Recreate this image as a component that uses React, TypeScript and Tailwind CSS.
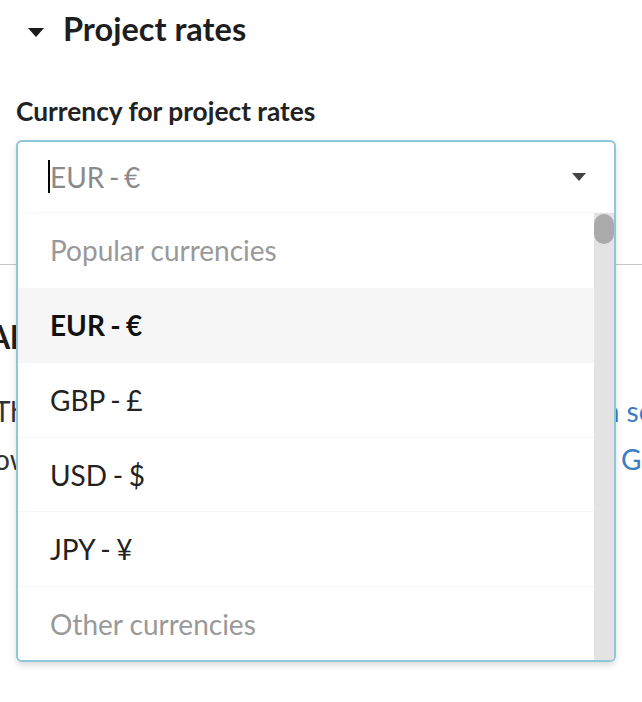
import { useState } from 'react';

const popular = ['EUR - €', 'GBP - £', 'USD - $', 'JPY - ¥'];

export default function App() {
  const [selected] = useState('EUR - €');

  return (
    <div className="relative min-h-screen overflow-hidden bg-white font-['Lato',sans-serif] text-[#1e1e1e]">
      <div className="pt-[13px]">
        <div className="flex items-center gap-[19px] pl-[28px]">
          <svg width="16" height="9" viewBox="0 0 16 9" className="mt-[7px] shrink-0">
            <path d="M0 0h16L8 9z" fill="#1a1a1a" />
          </svg>
          <h2 className="text-[32.5px] leading-none font-bold">Project rates</h2>
        </div>

        <label className="mt-[52px] block pl-4 text-[26.3px] leading-none font-bold text-[#222]">
          Currency for project rates
        </label>

        <div className="relative mt-[16px] mr-[26px] ml-4 h-[72px]">
          <div className="absolute inset-x-0 top-0 z-10 flex flex-col overflow-hidden rounded-[6px] border-2 border-[#8ec6da] bg-white shadow-[0_3px_6px_rgba(0,0,0,0.15)]">
            <div className="flex h-[70px] items-center pr-[28px] pl-[30px]">
              <span className="h-[33px] w-[2px] bg-black" />
              <span className="flex-1 text-[28px] leading-none [word-spacing:-2.5px] text-[#8a8a8a]">
                {selected}
              </span>
              <svg width="14" height="8" viewBox="0 0 14 8" className="mt-[1px]">
                <path d="M0 0h14L7 8z" fill="#444" />
              </svg>
            </div>
            <div className="flex h-[448px] border-t border-[#f6f6f6]">
              <ul className="flex-1">
                <li className="flex h-[75px] items-center pl-[32px] text-[28px] leading-none text-[#999]">
                  Popular currencies
                </li>
                {popular.map((c) => (
                  <li
                    key={c}
                    className={
                      c === selected
                        ? 'flex h-[74.5px] items-center bg-[#f6f6f6] pl-[32px] text-[28px] leading-none font-bold [word-spacing:-1.5px] text-[#111]'
                        : 'flex h-[74.5px] items-center border-t border-[#f6f6f6] pl-[32px] text-[28px] leading-none [word-spacing:-1.5px] text-[#222]'
                    }
                  >
                    {c}
                  </li>
                ))}
                <li className="flex h-[74.5px] items-center border-t border-[#f6f6f6] pl-[32px] text-[28px] leading-none text-[#999]">
                  Other currencies
                </li>
              </ul>
              <div className="w-[20px] bg-[#e3e3e3] pt-[1px]">
                <div className="h-[30px] w-[20px] rounded-full bg-[#aaaaaa]" />
              </div>
            </div>
          </div>
        </div>

        <div className="mt-[52px] h-px bg-[#c9c9c9]" />

        <h2 className="mt-[56px] -ml-[12px] text-[32px] leading-none font-bold whitespace-nowrap">
          All project rates
        </h2>

        <div className="mt-[34px] -ml-[6px] text-[28px] leading-[48px] whitespace-nowrap text-[#333]">
          <div className="flex">
            <span className="w-[603px] shrink-0 overflow-hidden">
              These rates are used for every new project and can be changed i
            </span>
            <a className="text-[#3b7dc4]">in settings</a>
          </div>
          <div className="flex">
            <span className="w-[600px] shrink-0 overflow-hidden">
              owners of the workspace. To change the default currency, visit
            </span>
            <a className="ml-[27px] text-[#3b7dc4]">General settings</a>
          </div>
        </div>
      </div>
    </div>
  );
}
